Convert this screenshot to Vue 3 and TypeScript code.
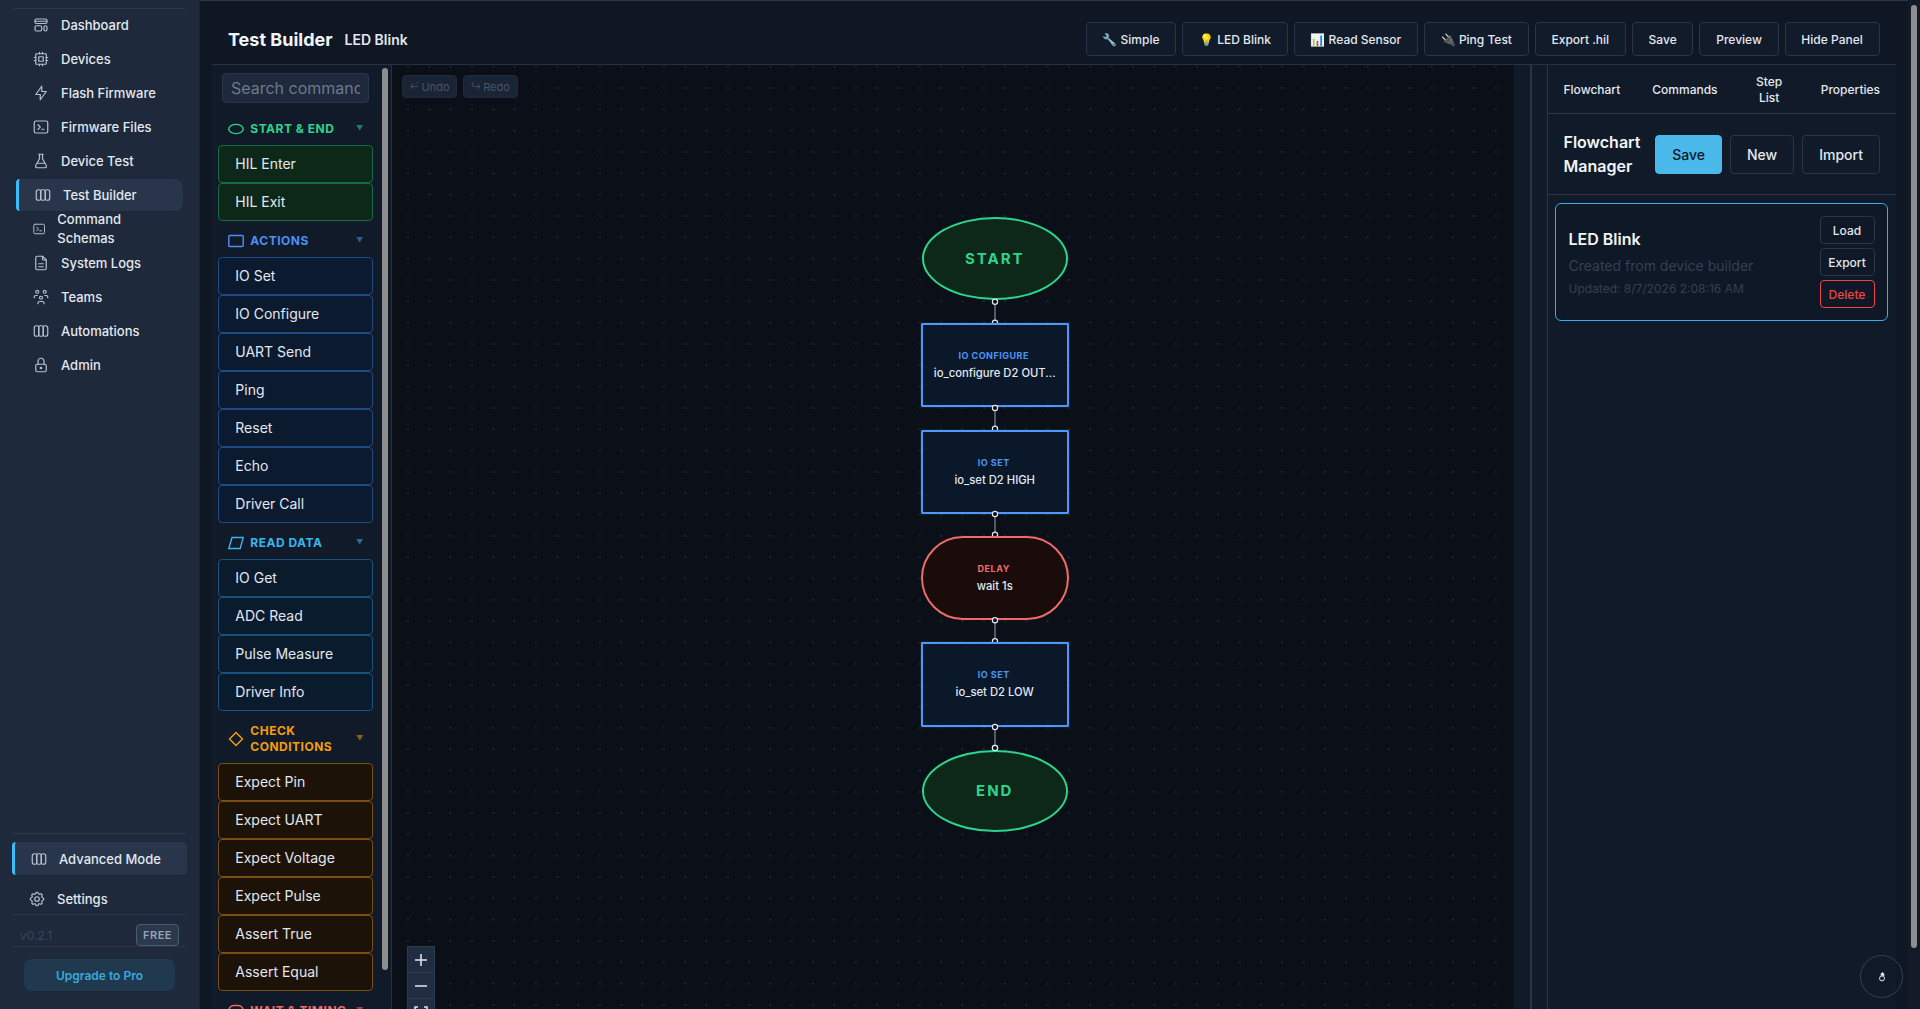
<script setup lang="ts">
interface NavItem { label: string; icon: string; active?: boolean; wrap?: boolean }
interface Cmd { title: string; tone: string; shape: string; items: string[] }
interface FlowNode { kind: string; x: number; y: number; w: number; h: number; label: string; title: string }

const paths: Record<string, string[]> = {
  dash: ['M6 4h12a2 2 0 0 1 2 2v2a2 2 0 0 1-2 2h-12a2 2 0 0 1-2-2v-2a2 2 0 0 1 2-2z', 'M4 7h16', 'M6 13h5a2 2 0 0 1 2 2v3a2 2 0 0 1-2 2h-5a2 2 0 0 1-2-2v-3a2 2 0 0 1 2-2z', 'M18 13a2 2 0 0 1 2 2v3a2 2 0 0 1-4 0v-3a2 2 0 0 1 2-2z'],
  cpu: ['M6 5h12a1 1 0 0 1 1 1v12a1 1 0 0 1-1 1h-12a1 1 0 0 1-1-1v-12a1 1 0 0 1 1-1z', 'M9 9h6v6h-6z', 'M3 10h2M3 14h2M10 3v2M14 3v2M21 10h-2M21 14h-2M14 21v-2M10 21v-2'],
  bolt: ['M13 3v7h6l-8 11v-7h-6l8-11'],
  term: ['M8 9l3 3l-3 3', 'M13 15h3', 'M5 4h14a2 2 0 0 1 2 2v12a2 2 0 0 1-2 2h-14a2 2 0 0 1-2-2v-12a2 2 0 0 1 2-2z'],
  flask: ['M9 3h6', 'M10 3v6l-5 9a2 2 0 0 0 2 3h10a2 2 0 0 0 2-3l-5-9v-6', 'M7.5 15h9'],
  cols: ['M6 5h1a2 2 0 0 1 2 2v10a2 2 0 0 1-2 2h-1a3 3 0 0 1-3-3v-8a3 3 0 0 1 3-3z', 'M9 7a2 2 0 0 1 2-2h2a2 2 0 0 1 2 2v10a2 2 0 0 1-2 2h-2a2 2 0 0 1-2-2z', 'M15 7a2 2 0 0 1 2-2h1a3 3 0 0 1 3 3v8a3 3 0 0 1-3 3h-1a2 2 0 0 1-2-2z'],
  file: ['M14 3v4a1 1 0 0 0 1 1h4', 'M17 21h-10a2 2 0 0 1-2-2v-14a2 2 0 0 1 2-2h7l5 5v11a2 2 0 0 1-2 2', 'M9 13h6', 'M9 17h6'],
  users: ['M10 13a2 2 0 1 0 4 0a2 2 0 0 0-4 0', 'M8 21v-1a2 2 0 0 1 2-2h4a2 2 0 0 1 2 2v1', 'M15 5a2 2 0 1 0 4 0a2 2 0 0 0-4 0', 'M17 10h2a2 2 0 0 1 2 2v1', 'M5 5a2 2 0 1 0 4 0a2 2 0 0 0-4 0', 'M3 13v-1a2 2 0 0 1 2-2h2'],
  lock: ['M5 13a2 2 0 0 1 2-2h10a2 2 0 0 1 2 2v6a2 2 0 0 1-2 2h-10a2 2 0 0 1-2-2v-6z', 'M11 16a1 1 0 1 0 2 0a1 1 0 0 0-2 0', 'M8 11v-4a4 4 0 1 1 8 0v4'],
  gear: ['M10.325 4.317c.426-1.756 2.924-1.756 3.35 0a1.724 1.724 0 0 0 2.573 1.066c1.543-.94 3.31.826 2.37 2.37a1.724 1.724 0 0 0 1.065 2.572c1.756.426 1.756 2.924 0 3.35a1.724 1.724 0 0 0-1.066 2.573c.94 1.543-.826 3.31-2.37 2.37a1.724 1.724 0 0 0-2.572 1.065c-.426 1.756-2.924 1.756-3.35 0a1.724 1.724 0 0 0-2.573-1.066c-1.543.94-3.31-.826-2.37-2.37a1.724 1.724 0 0 0-1.065-2.572c-1.756-.426-1.756-2.924 0-3.35a1.724 1.724 0 0 0 1.066-2.573c-.94-1.543.826-3.31 2.37-2.37c1 .608 2.296.07 2.572-1.065z', 'M9 12a3 3 0 1 0 6 0a3 3 0 0 0-6 0'],
}

const nav: NavItem[] = [
  { label: 'Dashboard', icon: 'dash' },
  { label: 'Devices', icon: 'cpu' },
  { label: 'Flash Firmware', icon: 'bolt' },
  { label: 'Firmware Files', icon: 'term' },
  { label: 'Device Test', icon: 'flask' },
  { label: 'Test Builder', icon: 'cols', active: true },
  { label: 'Command Schemas', icon: 'term', wrap: true },
  { label: 'System Logs', icon: 'file' },
  { label: 'Teams', icon: 'users' },
  { label: 'Automations', icon: 'cols' },
  { label: 'Admin', icon: 'lock' },
]

const toolbar = ['🔧 Simple', '💡 LED Blink', '📊 Read Sensor', '🔌 Ping Test', 'Export .hil', 'Save', 'Preview', 'Hide Panel']

const sections: Cmd[] = [
  { title: 'Start & End', tone: 'green', shape: 'oval', items: ['HIL Enter', 'HIL Exit'] },
  { title: 'Actions', tone: 'blue', shape: 'rect', items: ['IO Set', 'IO Configure', 'UART Send', 'Ping', 'Reset', 'Echo', 'Driver Call'] },
  { title: 'Read Data', tone: 'sky', shape: 'para', items: ['IO Get', 'ADC Read', 'Pulse Measure', 'Driver Info'] },
  { title: 'Check Conditions', tone: 'amber', shape: 'diamond', items: ['Expect Pin', 'Expect UART', 'Expect Voltage', 'Expect Pulse', 'Assert True', 'Assert Equal'] },
  { title: 'Wait & Timing', tone: 'red', shape: 'pill', items: ['Delay'] },
]

// Canvas coordinates: the canvas box starts at (392, 65) in the page.
const ox = 392
const oy = 65
const nodes: FlowNode[] = [
  { kind: 'oval', x: 921.5, y: 217.3, w: 146.5, h: 83, label: '', title: 'START' },
  { kind: 'box', x: 920.7, y: 323, w: 148, h: 84.3, label: 'IO CONFIGURE', title: 'io_configure D2 OUT...' },
  { kind: 'box', x: 920.7, y: 429.7, w: 148, h: 84, label: 'IO SET', title: 'io_set D2 HIGH' },
  { kind: 'pill', x: 920.7, y: 536, w: 148, h: 84, label: 'DELAY', title: 'wait 1s' },
  { kind: 'box', x: 920.7, y: 642.3, w: 148, h: 84.4, label: 'IO SET', title: 'io_set D2 LOW' },
  { kind: 'oval', x: 921.5, y: 749.7, w: 146.5, h: 82, label: '', title: 'END' },
]
const links = [
  { from: 301.7, to: 322.7, topTarget: false },
  { from: 408, to: 428.7, topTarget: false },
  { from: 514, to: 534.7, topTarget: false },
  { from: 620.3, to: 641.3, topTarget: false },
  { from: 727, to: 748, topTarget: true },
]
const hx = 995 - ox
function nodeStyle(n: FlowNode) {
  return { left: `${n.x - ox}px`, top: `${n.y - oy}px`, width: `${n.w}px`, height: `${n.h}px` }
}
</script>

<template>
  <div class="app">
    <aside class="sidebar">
      <div class="rule first"></div>
      <nav class="nav">
        <a v-for="item in nav" :key="item.label" class="nav-item" :class="{ active: item.active, wrap: item.wrap }">
          <svg class="ico" viewBox="0 0 24 24"><path v-for="d in paths[item.icon]" :key="d" :d="d" /></svg>
          <span>{{ item.label }}</span>
        </a>
      </nav>
      <div class="rule"></div>
      <a class="adv">
        <svg class="ico" viewBox="0 0 24 24"><path v-for="d in paths.cols" :key="d" :d="d" /></svg>
        <span>Advanced Mode</span>
      </a>
      <a class="settings">
        <svg class="ico" viewBox="0 0 24 24"><path v-for="d in paths.gear" :key="d" :d="d" /></svg>
        <span>Settings</span>
      </a>
      <div class="rule"></div>
      <div class="version">
        <span>v0.2.1</span>
        <b class="badge">FREE</b>
      </div>
      <div class="rule"></div>
      <button class="upgrade">Upgrade to Pro</button>
    </aside>

    <main class="main">
      <header class="head">
        <h1>Test Builder</h1>
        <span class="head-name">LED Blink</span>
        <div class="toolbar">
          <button v-for="b in toolbar" :key="b" class="btn">{{ b }}</button>
        </div>
      </header>

      <div class="body">
        <section class="palette">
          <input class="search" placeholder="Search commands..." />
          <div v-for="s in sections" :key="s.title" class="group" :class="s.tone">
            <div class="group-head">
              <svg class="shape" viewBox="0 0 16 16">
                <ellipse v-if="s.shape === 'oval'" cx="8" cy="8" rx="7.2" ry="4.6" />
                <rect v-else-if="s.shape === 'rect'" x="0.8" y="2.5" width="14.4" height="11" rx="1" />
                <path v-else-if="s.shape === 'para'" d="M4 2.5h11.2l-3 11h-11.4z" />
                <path v-else-if="s.shape === 'diamond'" d="M8 1.5l6.5 6.5l-6.5 6.5l-6.5-6.5z" />
                <rect v-else x="0.8" y="2.5" width="14.4" height="11" rx="5" />
              </svg>
              <span class="group-title">{{ s.title }}</span>
              <span class="caret">▼</span>
            </div>
            <div v-for="c in s.items" :key="c" class="cmd">{{ c }}</div>
          </div>
          <div class="thumb-left"></div>
        </section>

        <section class="canvas">
          <svg class="wires" width="1122" height="944">
            <g v-for="l in links" :key="l.from">
              <line :x1="hx" :x2="hx" :y1="l.from - oy" :y2="l.to - oy" />
              <circle :cx="hx" :cy="l.to - oy" r="2.6" />
            </g>
          </svg>
          <div v-for="n in nodes" :key="n.y" class="node" :class="n.kind" :style="nodeStyle(n)">
            <template v-if="n.label">
              <span class="node-label">{{ n.label }}</span>
              <span class="node-title">{{ n.title }}</span>
            </template>
            <span v-else class="node-name">{{ n.title }}</span>
          </div>
          <svg class="wires top" width="1122" height="944">
            <g v-for="l in links" :key="l.from">
              <circle :cx="hx" :cy="l.from - oy" r="2.6" />
              <circle v-if="l.topTarget" :cx="hx" :cy="l.to - oy" r="2.6" />
            </g>
          </svg>
          <div class="history">
            <button class="hist"><span class="arrow">↩︎</span> Undo</button>
            <button class="hist"><span class="arrow">↪︎</span> Redo</button>
          </div>
          <div class="zoom">
            <button class="zoom-btn"><svg viewBox="0 0 14 14"><path d="M7 1v12M1 7h12" /></svg></button>
            <button class="zoom-btn"><svg viewBox="0 0 14 14"><path d="M1 7h12" /></svg></button>
            <button class="zoom-btn"><svg viewBox="0 0 14 14"><path d="M1 4v-2h3M10 2h3v2M1 10v2h3M10 12h3v-2" /></svg></button>
          </div>
        </section>

        <div class="gutter"></div>
        <div class="gutter second"></div>

        <section class="side">
          <div class="tabs">
            <button class="tab">Flowchart</button>
            <button class="tab">Commands</button>
            <button class="tab">Step List</button>
            <button class="tab">Properties</button>
          </div>
          <div class="manager">
            <h2>Flowchart Manager</h2>
            <button class="mbtn primary">Save</button>
            <button class="mbtn">New</button>
            <button class="mbtn">Import</button>
          </div>
          <article class="card">
            <div class="card-info">
              <h3>LED Blink</h3>
              <p class="desc">Created from device builder</p>
              <p class="stamp">Updated: 8/7/2026 2:08:16 AM</p>
            </div>
            <div class="card-actions">
              <button class="cbtn">Load</button>
              <button class="cbtn">Export</button>
              <button class="cbtn danger">Delete</button>
            </div>
          </article>
        </section>
      </div>
    </main>

    <div class="page-track"><div class="page-thumb"></div></div>
    <button class="fab" aria-label="Hand tool">
      <svg viewBox="0 0 12 12" width="12" height="12"><circle cx="6" cy="7.4" r="2.5" /><path class="fill" d="M4.6 4.6l.2-2.4h.9l.3-1h.9l.4 1h.8l.3 2.8z" /></svg>
    </button>
  </div>
</template>

<style>
html, body { margin: 0; background: #0f1724; overflow: hidden; }
</style>

<style scoped>
.app {
  position: relative;
  display: flex;
  width: 1920px;
  height: 1009px;
  overflow: hidden;
  background: #0f1724;
  color: #e2e8f0;
  font-family: Inter, "Liberation Sans", sans-serif;
}
button { font-family: inherit; cursor: pointer; }

/* Sidebar */
.sidebar {
  flex: none;
  width: 200px;
  box-sizing: border-box;
  padding: 8px 12px 18px;
  display: flex;
  flex-direction: column;
  background: #1e293b;
  border-right: 1px solid #192233;
}
.rule { height: 1px; margin: 0 1px; background: #2b384b; flex: none; }
.first { background: #28354a; }
.nav { flex: 1; padding: 0 4px; }
.nav-item {
  display: flex;
  align-items: center;
  gap: 11px;
  box-sizing: border-box;
  height: 32px;
  margin-bottom: 2px;
  padding: 0 12px 0 16px;
  font-size: 13px;
  font-weight: 500;
  line-height: 19px;
  border-radius: 6px;
}
.nav-item.wrap { padding-right: 27px; }
.nav-item.active {
  background: #28354a;
  border-left: 3px solid #38bdf8;
  border-radius: 4px 8px 8px 4px;
  padding-left: 15px;
}
.ico {
  width: 18px;
  height: 18px;
  fill: none;
  stroke: #b6c2d2;
  stroke-width: 1.6;
  stroke-linecap: round;
  stroke-linejoin: round;
}
.adv {
  display: flex;
  align-items: center;
  gap: 11px;
  box-sizing: border-box;
  height: 33px;
  margin-top: 8px;
  padding-left: 15px;
  font-size: 13px;
  font-weight: 500;
  background: #28354a;
  border-left: 3px solid #38bdf8;
  border-radius: 4px;
}
.settings {
  display: flex;
  align-items: center;
  gap: 11px;
  box-sizing: border-box;
  height: 32px;
  margin-top: 7px;
  padding: 2px 0 0 16px;
  font-size: 13px;
  font-weight: 500;
}
.version {
  display: flex;
  align-items: flex-end;
  justify-content: space-between;
  height: 31px;
  padding: 0 8px;
  font-size: 12px;
  line-height: 21px;
  color: #37465a;
}
.badge {
  box-sizing: border-box;
  width: 43px;
  height: 22px;
  line-height: 20px;
  text-align: center;
  font-size: 11px;
  font-weight: 600;
  letter-spacing: .5px;
  color: #94a3b8;
  background: #2c394c;
  border: 1px solid #4b5a6f;
  border-radius: 4px;
}
.upgrade {
  flex: none;
  width: 151px;
  height: 32px;
  margin: 12px 0 0 12px;
  border: 0;
  border-radius: 8px;
  font-size: 12px;
  font-weight: 600;
  color: #38a9dc;
  background: #21394f;
}

/* Main */
.main {
  flex: 1;
  min-width: 0;
  padding-left: 12px;
  padding-right: 24px;
  border-top: 1px solid #2b3648;
  display: flex;
  flex-direction: column;
}
.head {
  flex: none;
  box-sizing: border-box;
  height: 64px;
  display: flex;
  align-items: center;
  padding: 13px 16.5px 0 16px;
  border-bottom: 1px solid #263143;
}
h1 { margin: 0; font-size: 18px; font-weight: 700; color: #f1f5f9; }
.head-name { margin-left: 12px; font-size: 14px; font-weight: 600; }
.toolbar { margin-left: auto; display: flex; gap: 6px; }
.btn {
  height: 34px;
  padding: 0 15.75px;
  border: 1px solid #2a3548;
  border-radius: 4px;
  background: #121b2a;
  color: #e2e8f0;
  font-size: 12px;
  font-weight: 500;
}
.body { flex: 1; min-height: 0; display: flex; }

/* Palette */
.palette {
  position: relative;
  flex: none;
  box-sizing: border-box;
  width: 180px;
  height: 944px;
  overflow: hidden;
  padding: 8px 0 0 6.3px;
  background: #111a29;
  border-right: 1px solid #263143;
}
.search {
  display: block;
  box-sizing: border-box;
  width: 147px;
  height: 30px;
  margin: 0 0 6px 3.7px;
  padding: 0 8px;
  font: 400 16px Inter, sans-serif;
  color: #e2e8f0;
  background: #1e293b;
  border: 1px solid #293548;
  border-radius: 4px;
  outline: none;
}
.search::placeholder { color: #6b7a8f; opacity: 1; }
.group { width: 154.5px; padding-top: 4px; }
.group-head {
  display: flex;
  align-items: center;
  gap: 6px;
  padding: 8px 9px 8px 10px;
  font-size: 12px;
  line-height: 16px;
  font-weight: 700;
  letter-spacing: .5px;
  text-transform: uppercase;
}
.shape { flex: none; width: 16px; height: 16px; fill: none; stroke: currentColor; stroke-width: 1.4; }
.group-title { flex: 1; min-width: 0; }
.caret { flex: none; font-size: 7px; opacity: .55; }
.cmd {
  box-sizing: border-box;
  height: 37.5px;
  margin-bottom: .5px;
  padding-left: 16px;
  line-height: 35.5px;
  font-size: 14px;
  color: #e2e8f0;
  border: 1px solid;
  border-radius: 4px;
}
.green .group-head { color: #2dd48e; }
.green .cmd { background: #0d2818; border-color: #166b47; }
.blue .group-head { color: #4f8ef7; }
.blue .cmd { background: #0c1a2f; border-color: #1e4a86; }
.sky .group-head { color: #38b6f0; }
.sky .cmd { background: #0b1b2e; border-color: #19527a; }
.amber .group-head { color: #f59e0b; }
.amber .cmd { background: #1c1208; border-color: #7a4d10; }
.red .group-head { color: #f06a6a; }
.red .cmd { background: #1e0c0c; border-color: #7a2c2c; }
.thumb-left {
  position: absolute;
  left: 170px;
  top: 3px;
  width: 6px;
  height: 902px;
  border-radius: 3px;
  background: #8e8e8e;
}

/* Canvas */
.canvas {
  position: relative;
  flex: none;
  width: 1122px;
  height: 944px;
  overflow: hidden;
  background-color: #0b0f17;
  background-image: radial-gradient(circle at center, #202836 0, #202836 .7px, transparent 1px);
  background-size: 21.33px 21.33px;
  background-position: 5.3px -9px;
}
.wires { position: absolute; left: 0; top: 0; pointer-events: none; }
.wires line { stroke: #6b7484; stroke-width: 1.5; }
.wires circle { fill: #0b0f17; stroke: #e2e8f0; stroke-width: 1.2; }
.node {
  position: absolute;
  box-sizing: border-box;
  display: flex;
  flex-direction: column;
  align-items: center;
  justify-content: center;
  gap: 4px;
  border: 2px solid;
}
.node.box { background: #0b1829; border-color: #4f97fb; border-radius: 2px; box-shadow: 0 0 1px #4f97fb; }
.node.oval { background: #0d2818; border-color: #2dd48e; border-radius: 50%; }
.node.pill { background: #1b0c0c; border-color: #ef6b6b; border-radius: 42px; }
.node-label { font-size: 9px; line-height: 13px; font-weight: 700; letter-spacing: .5px; margin-right: 2px; }
.node-title { font-size: 11.25px; line-height: 15px; font-weight: 500; color: #e2e8f0; }
.box .node-label { color: #4d94f5; }
.pill .node-label { color: #ef6b6b; }
.node-name { font-size: 15px; font-weight: 700; letter-spacing: 2px; color: #2dd48e; }
.history { position: absolute; left: 10px; top: 10px; display: flex; gap: 6px; }
.hist {
  width: 55px;
  height: 23px;
  padding: 0;
  font-size: 11px;
  white-space: nowrap;
  color: #475569;
  background: #1a2434;
  border: 1px solid #1f2a3b;
  border-radius: 4px;
}
.arrow { display: inline-block; width: 9px; font-size: 9px; overflow: hidden; vertical-align: baseline; }
.zoom { position: absolute; left: 15px; top: 881px; width: 28px; }
.zoom-btn {
  display: flex;
  align-items: center;
  justify-content: center;
  box-sizing: border-box;
  width: 28px;
  height: 26px;
  padding: 0;
  background: #212d41;
  border: 1px solid #2f3b4f;
  border-bottom-width: 0;
}
.zoom-btn svg { width: 14px; height: 14px; fill: none; stroke: #e2e8f0; stroke-width: 1.5; }

/* Gutter */
.gutter { flex: none; width: 16px; height: 944px; background: #111a28; }
.gutter.second { width: 15px; border-left: 2px solid #2a3547; }

/* Right panel */
.side {
  flex: 1;
  min-width: 0;
  background: #111a28;
  border-left: 1px solid #2a3547;
}
.tabs {
  display: flex;
  height: 49px;
  box-sizing: border-box;
  padding-top: 2px;
  border-bottom: 1px solid #2a3547;
}
.tab {
  padding: 0 16px;
  background: none;
  border: 0;
  color: #e2e8f0;
  font-size: 12px;
  line-height: 16px;
  font-weight: 500;
}
.tab:first-child { padding-left: 15.5px; }
.manager {
  display: flex;
  align-items: center;
  gap: 8px;
  box-sizing: border-box;
  height: 81px;
  padding: 0 16px 0 15.5px;
  border-bottom: 1px solid #2a3547;
}
h2 { flex: 1; min-width: 0; margin: 0; font-size: 16px; line-height: 24px; font-weight: 600; color: #f1f5f9; }
.mbtn {
  flex: none;
  height: 39px;
  padding: 0 16px;
  font-size: 14px;
  font-weight: 500;
  color: #e2e8f0;
  background: #111a28;
  border: 1px solid #2a3548;
  border-radius: 4px;
}
.mbtn.primary { background: #4ab8e8; border-color: #4ab8e8; color: #0f172a; }
.card {
  display: flex;
  align-items: center;
  justify-content: space-between;
  box-sizing: border-box;
  height: 118px;
  margin: 8px 8px 0 7px;
  padding: 12px 12.5px 12px 12.5px;
  border: 1px solid #38aee8;
  border-radius: 6px;
  background: #0f1826;
}
h3 { margin: 0; font-size: 16px; line-height: 24px; font-weight: 600; color: #f1f5f9; }
.card p { margin: 0; }
.desc { margin-top: 5px !important; font-size: 14px; line-height: 20px; color: #334155; }
.stamp { margin-top: 4px !important; font-size: 12px; line-height: 17px; color: #334155; }
.card-actions { display: flex; flex-direction: column; gap: 4px; }
.cbtn {
  width: 55px;
  height: 28px;
  padding: 0;
  font-size: 12px;
  font-weight: 500;
  color: #e2e8f0;
  background: transparent;
  border: 1px solid #2a3548;
  border-radius: 4px;
}
.cbtn.danger { color: #ef4444; border-color: #ef4444; }

/* Page scrollbar and floating button */
.page-track { position: absolute; right: 0; top: 0; width: 12px; height: 1009px; background: #131b28; }
.page-thumb { width: 6px; height: 943px; margin: 5px 0 0 3px; border-radius: 3px; background: #8e8e8e; }
.fab {
  position: absolute;
  left: 1860px;
  top: 955px;
  width: 43px;
  height: 43px;
  display: flex;
  align-items: center;
  justify-content: center;
  padding: 0;
  border: 1px solid #334155;
  border-radius: 50%;
  background: transparent;
}
.fab svg { fill: none; stroke: #e2e8f0; stroke-width: 1; }
.fab .fill { fill: #e2e8f0; stroke: none; }
</style>
